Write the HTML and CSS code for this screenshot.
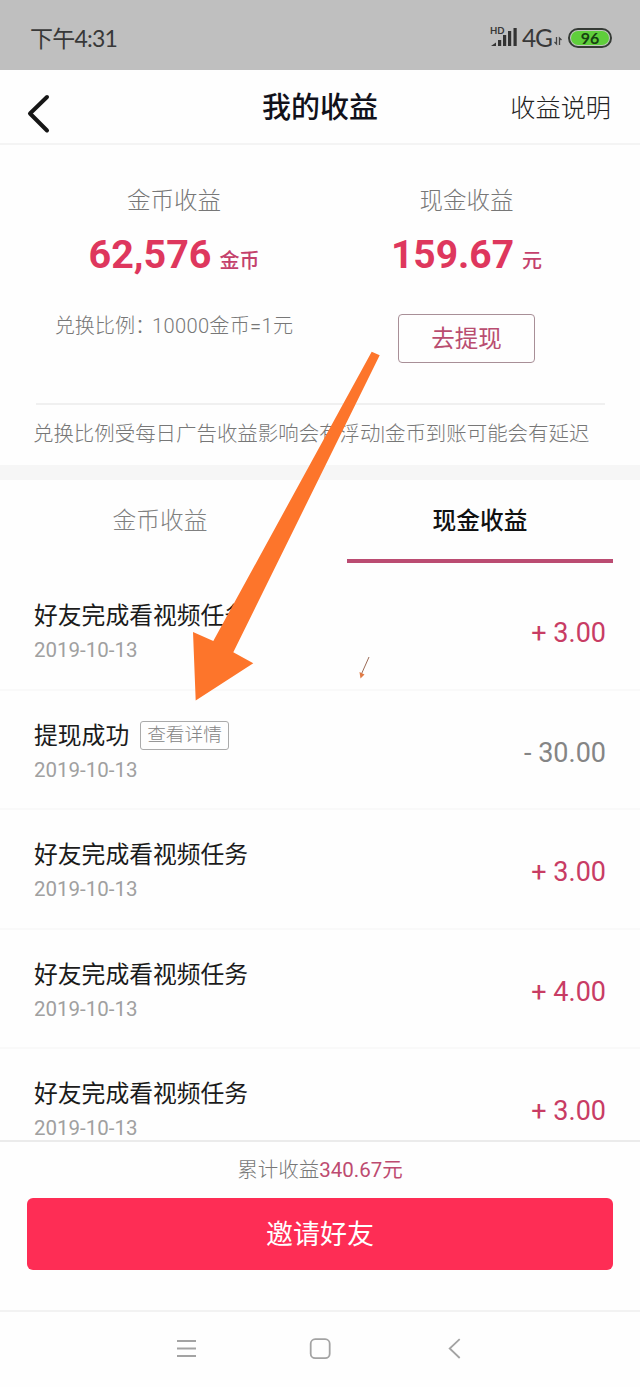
FILE: index.html
```html
<!DOCTYPE html>
<html lang="zh-CN">
<head>
<meta charset="utf-8">
<title>我的收益</title>
<link rel="stylesheet" href="styles.css">
</head>
<body>
<div class="screen">
  <div class="status">
    <span class="time">下午4:31</span>
    <svg class="signal" width="28" height="26" viewBox="0 0 28 26">
      <text class="hd" x="0" y="9">HD</text>
      <g fill="#333"><path d="M1 21l5-3.500v3.500z"/><rect x="8" y="15" width="3.200" height="6"/><rect x="13" y="10" width="3.200" height="11"/><rect x="18" y="6" width="3.200" height="15"/><rect x="23.500" y="3" width="3.200" height="18"/></g>
    </svg>
    <span class="net">4G</span>
    <svg class="updown" width="8" height="10" viewBox="0 0 8 10"><path d="M2.500 1v7L.5 6M5.500 9V2l2 2" fill="none" stroke="#444" stroke-width="1.300"/></svg>
    <span class="battery"><span class="level">96</span></span>
  </div>

  <header class="header">
    <svg class="back" width="28" height="42" viewBox="0 0 28 42"><path d="M22 5L5 21.500L22 38.500" fill="none" stroke="#161616" stroke-width="4" stroke-linecap="round" stroke-linejoin="round"/></svg>
    <h1 class="title">我的收益</h1>
    <span class="explain">收益说明</span>
  </header>

  <section class="summary">
    <div class="columns">
      <div class="column">
        <div class="label">金币收益</div>
        <div class="amount"><b class="figure">62,576</b><span class="unit">金币</span></div>
        <div class="ratio">兑换比例：<span class="rate">10000金币=1元</span></div>
      </div>
      <div class="column">
        <div class="label">现金收益</div>
        <div class="amount"><b class="figure cash">159.67</b><span class="unit">元</span></div>
        <div class="withdraw">去提现</div>
      </div>
    </div>
    <p class="note">兑换比例受每日广告收益影响会有浮动|金币到账可能会有延迟</p>
  </section>

  <nav class="tabs">
    <div class="tab">金币收益</div>
    <div class="tab active">现金收益</div>
  </nav>

  <main class="list">
    <div class="row">
      <div class="info"><div class="name">好友完成看视频任务</div><div class="date">2019-10-13</div></div>
      <div class="sum">+ 3.00</div>
    </div>
    <div class="row">
      <div class="info"><div class="name">提现成功<span class="detail">查看详情</span></div><div class="date">2019-10-13</div></div>
      <div class="sum out">- 30.00</div>
    </div>
    <div class="row">
      <div class="info"><div class="name">好友完成看视频任务</div><div class="date">2019-10-13</div></div>
      <div class="sum">+ 3.00</div>
    </div>
    <div class="row">
      <div class="info"><div class="name">好友完成看视频任务</div><div class="date">2019-10-13</div></div>
      <div class="sum">+ 4.00</div>
    </div>
    <div class="row">
      <div class="info"><div class="name">好友完成看视频任务</div><div class="date">2019-10-13</div></div>
      <div class="sum">+ 3.00</div>
    </div>
  </main>

  <footer class="footer">
    <div class="total">累计收益<span class="total-sum">340.67元</span></div>
    <div class="invite">邀请好友</div>
  </footer>

  <div class="navbar">
    <svg width="22" height="22" viewBox="0 0 22 22"><path d="M2 3h19M2 10.500h19M2 18h19" stroke="#a3a3a3" stroke-width="1.800"/></svg>
    <svg width="22" height="22" viewBox="0 0 22 22"><rect x="1.700" y="1.200" width="19" height="19" rx="4.500" fill="none" stroke="#a3a3a3" stroke-width="1.800"/></svg>
    <svg width="22" height="22" viewBox="0 0 22 22"><path d="M16.700 1.200L6.700 10.500l10 9.500" fill="none" stroke="#a3a3a3" stroke-width="1.800"/></svg>
  </div>

  <svg class="pointer" width="640" height="1387" viewBox="0 0 640 1387">
    <path d="M371.700 351.700L379.700 355.300L233.300 652.300L253.300 663.300L195.700 700.500L193 632L213.300 641z" fill="#fd752b"/>
    <path d="M369 657L361 675" stroke="#9b6a55" stroke-width="1"/><path d="M359.500 672l1 6.500 4-4z" fill="#e07a45"/>
  </svg>
</div>
</body>
</html>
```
FILE: styles.css
```css
* { box-sizing: border-box; }
body { margin: 0; background: #fefefe; font-family: Roboto, "Noto Sans CJK SC", sans-serif; color: #1c1c1c; }
.screen { position: relative; display: flex; flex-direction: column; width: 640px; height: 1387px; overflow: hidden; white-space: nowrap; }
.status { flex: none; display: flex; align-items: center; height: 70px; padding: 6px 28px 0 30px; background: #bfbfbf; color: #383838; }
.time { flex: 1; font-family: Lato, "Noto Sans CJK SC", sans-serif; font-size: 23px; font-weight: 400; line-height: 30px; letter-spacing: -.8px; }
.signal { margin-right: 4px; }
.hd { font: bold 9.500px Lato, sans-serif; fill: #383838; }
.net { font-family: Lato, sans-serif; font-size: 24.500px; line-height: 30px; letter-spacing: -1px; }
.updown { margin: 6px 6px 0 2px; }
.battery { display: flex; width: 44px; height: 20px; padding: 1px; border: 2px solid #363b36; border-radius: 10px; background: #bfc9bd; }
.level { flex: 1; border-radius: 7px; background: #5fce3b; color: #174012; font: bold 16px/14px Lato, sans-serif; text-align: center; }

.header { flex: none; display: grid; grid-template-columns: 140px 1fr 140px; align-items: center; height: 75px; padding: 0 29px 0 25px; border-bottom: 2px solid #f4f4f4; }
.back { margin-top: 12px; }
.title { margin: 3px 0 0 4px; text-align: center; font-size: 29px; line-height: 40px; font-weight: 500; color: #11111a; }
.explain { margin-top: 4px; text-align: right; font-size: 25.200px; line-height: 36px; color: #222; font-weight: 300; }

.summary { flex: none; height: 335px; border-bottom: 15px solid #f6f6f6; }
.columns { display: grid; grid-template-columns: 276px 1fr; height: 260px; margin: 0 35px 0 36px; border-bottom: 2px solid #f0f0f0; }
.column { display: flex; flex-direction: column; align-items: center; padding-top: 38px; }
.column + .column { padding-left: 16px; }
.label { font-size: 23.500px; font-weight: 300; line-height: 36px; color: #777; }
.amount { display: flex; align-items: baseline; gap: 8px; margin-top: 8px; line-height: 56px; color: #de375d; }
.figure { font-size: 39.500px; font-weight: 700; }
.figure.cash { font-size: 39px; }
.unit { font-size: 20px; font-weight: 500; color: #c4416c; }
.ratio { margin-top: 22px; font-size: 20.100px; font-weight: 300; line-height: 30px; color: #777; }
.rate { margin-left: -3px; letter-spacing: .3px; }
.withdraw { width: 137px; height: 49px; margin-top: 25px; border: 1px solid #a88f97; border-radius: 4px; text-align: center; font-size: 23.500px; line-height: 48px; color: #b94d70; }
.note { margin: 13px 0 0 33px; font-size: 20.450px; font-weight: 300; line-height: 32px; color: #777; }

.tabs { flex: none; display: grid; grid-template-columns: 266px 266px; gap: 54px; height: 83px; padding-left: 27px; }
.tab { padding-top: 3px; text-align: center; font-size: 23.700px; font-weight: 300; line-height: 76px; color: #808080; }
.tab.active { border-bottom: 4px solid #bb4c72; font-weight: 500; color: #111; }

.list { flex: none; height: 569px; margin-top: 8px; overflow: hidden; }
.row { display: flex; justify-content: space-between; height: 119.500px; padding: 0 34px; border-bottom: 2px solid #f9f9f9; }
.info { padding-top: 27px; }
.name { display: flex; align-items: center; font-size: 23.800px; line-height: 36px; color: #1b1b1b; }
.detail { height: 29px; margin-left: 11px; padding: 0 6px; border: 1px solid #aaa; border-radius: 3px; font-size: 18.700px; font-weight: 300; line-height: 27px; color: #858585; }
.date { margin-top: 3px; font-size: 20.500px; line-height: 26px; color: #a0a0a0; }
.sum { padding-top: 44px; font-size: 27px; line-height: 36px; color: #c83c64; }
.sum.out { color: #858585; }

.footer { flex: none; height: 170px; border-top: 2px solid #ebebeb; padding: 13px 27px 0; text-align: center; }
.total { font-size: 20.500px; font-weight: 300; line-height: 30px; color: #777; }
.total-sum { font-weight: 400; color: #bd4b70; }
.invite { height: 72px; margin-top: 13px; border-radius: 6px; background: #fe2d55; color: #fff; font-size: 27px; line-height: 74px; }
.navbar { flex: 1; display: flex; justify-content: center; gap: 112px; padding: 26px 0 0 0; border-top: 2px solid #f2f2f2; }
.pointer { position: absolute; inset: 0; pointer-events: none; }
```
